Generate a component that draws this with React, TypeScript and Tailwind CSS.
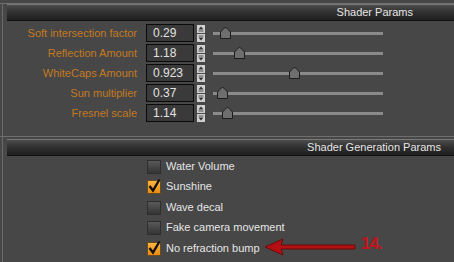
import React from "react";

const rows = [
  { label: "Soft intersection factor", value: "0.29", pos: 7 },
  { label: "Reflection Amount", value: "1.18", pos: 21 },
  { label: "WhiteCaps Amount", value: "0.923", pos: 76 },
  { label: "Sun multiplier", value: "0.37", pos: 4 },
  { label: "Fresnel scale", value: "1.14", pos: 9 },
];

const checks = [
  { label: "Water Volume", on: false },
  { label: "Sunshine", on: true },
  { label: "Wave decal", on: false },
  { label: "Fake camera movement", on: false },
  { label: "No refraction bump", on: true },
];

function Header({ title, pr }: { title: string; pr: string }) {
  return (
    <div
      className={`ml-[4px] h-[17px] flex items-center justify-end border-t border-[#7a7a7a] border-b border-b-[#111] bg-gradient-to-b from-[#4c4c4c] via-[#303030] to-[#1f1f1f] text-[11px] leading-none text-[#e6e6e6] ${pr}`}
    >
      {title}
    </div>
  );
}

function Spin() {
  return (
    <div className="flex flex-col gap-[1px] ml-[3px]">
      <svg width="8" height="8" viewBox="0 0 8 8">
        <rect x="0" y="0" width="8" height="8" fill="#cfcfcf" />
        <path d="M4 1.5 L6.5 4.5 L1.5 4.5 Z" fill="#333" />
        <rect x="1.5" y="5.5" width="5" height="1" fill="#555" />
      </svg>
      <svg width="8" height="8" viewBox="0 0 8 8">
        <rect x="0" y="0" width="8" height="8" fill="#cfcfcf" />
        <rect x="1.5" y="1.5" width="5" height="1" fill="#555" />
        <path d="M1.5 3.5 L6.5 3.5 L4 6.5 Z" fill="#333" />
      </svg>
    </div>
  );
}

function Slider({ pos }: { pos: number }) {
  return (
    <div className="relative ml-[8px] w-[170px] h-[18px] flex items-center">
      <div className="w-full h-[3px] bg-[#8a8a8a]" />
      <svg
        className="absolute top-[3px]"
        style={{ left: pos }}
        width="11"
        height="12"
        viewBox="0 0 11 12"
      >
        <path
          d="M5.5 0.5 Q6.5 0.5 10.5 5 L10.5 11.5 L0.5 11.5 L0.5 5 Q4.5 0.5 5.5 0.5 Z"
          fill="#6e6e6e"
          stroke="#1c1c1c"
          strokeWidth="1"
        />
      </svg>
    </div>
  );
}

function Check({ on }: { on: boolean }) {
  if (on) {
    return (
      <svg width="15" height="15" viewBox="0 0 15 15" className="overflow-visible">
        <defs>
          <linearGradient id="og" x1="0" y1="0" x2="0" y2="1">
            <stop offset="0" stopColor="#ffb640" />
            <stop offset="1" stopColor="#e88a10" />
          </linearGradient>
        </defs>
        <rect x="0.5" y="1.5" width="13" height="13" fill="url(#og)" stroke="#6a4a20" />
        <path d="M2.5 7 L6 11.5 L12.5 0.5" fill="none" stroke="#111" strokeWidth="2.4" />
      </svg>
    );
  }
  return (
    <svg width="15" height="15" viewBox="0 0 15 15">
      <defs>
        <linearGradient id="gg" x1="0" y1="0" x2="0" y2="1">
          <stop offset="0" stopColor="#5a5a5a" />
          <stop offset="1" stopColor="#333" />
        </linearGradient>
      </defs>
      <rect x="0.5" y="1.5" width="13" height="13" fill="url(#gg)" stroke="#2e2e2e" />
    </svg>
  );
}

export default function App() {
  return (
    <div
      className="relative w-[454px] h-[262px] overflow-hidden bg-[#474747]"
      style={{ fontFamily: '"Liberation Sans", Arial, sans-serif' }}
    >
      {/* Section 1 */}
      <div className="pt-[3px]">
        <div className="border-t border-[#6e6e6e] ml-0">
          <div className="ml-[2px] border-l border-[#6a6a6a] pb-[13px]">
            <Header title="Shader Params" pr="pr-[41px]" />
            <div className="pt-[2px] flex flex-col">
              {rows.map((r) => (
                <div key={r.label} className="h-[20px] flex items-center">
                  <div className="w-[134px] text-right text-[11px] text-[#c47a22] leading-none">
                    {r.label}
                  </div>
                  <div className="ml-[9px] w-[48px] h-[18px] border border-[#0a0a0a] bg-[#3a3a3a] flex items-center pl-[6px] text-[12px] text-[#e2e2e2] leading-none">
                    {r.value}
                  </div>
                  <Spin />
                  <Slider pos={r.pos} />
                </div>
              ))}
            </div>
          </div>
        </div>
      </div>

      {/* Section 2 */}
      <div className="border-t border-[#6e6e6e]">
        <div className="ml-[2px] border-l border-[#6a6a6a] pt-[2px] h-[200px]">
          <Header title="Shader Generation Params" pr="pr-[13px]" />
          <div className="flex flex-col">
            {checks.map((c) => (
              <div key={c.label} className="h-[20.5px] flex items-center">
                <div className="ml-[144px]">
                  <Check on={c.on} />
                </div>
                <span className="ml-[4px] text-[11px] text-[#e6e6e6] leading-none">{c.label}</span>
              </div>
            ))}
          </div>
        </div>
      </div>

      {/* Annotation arrow */}
      <svg
        className="absolute left-[262px] top-[236px]"
        width="96"
        height="22"
        viewBox="0 0 96 22"
      >
        <path
          d="M3 11 L21 3 L19 9 L93 9 L93 13 L19 13 L21 19 Z"
          fill="#b40f12"
          stroke="#6a0a0a"
          strokeWidth="1"
        />
      </svg>
      <div
        className="absolute left-[361px] top-[235px] text-[17px] font-bold text-[#c4141a] leading-none tracking-[-1px]"
        style={{ fontFamily: '"Liberation Sans", Arial, sans-serif' }}
      >
        14.
      </div>
    </div>
  );
}
